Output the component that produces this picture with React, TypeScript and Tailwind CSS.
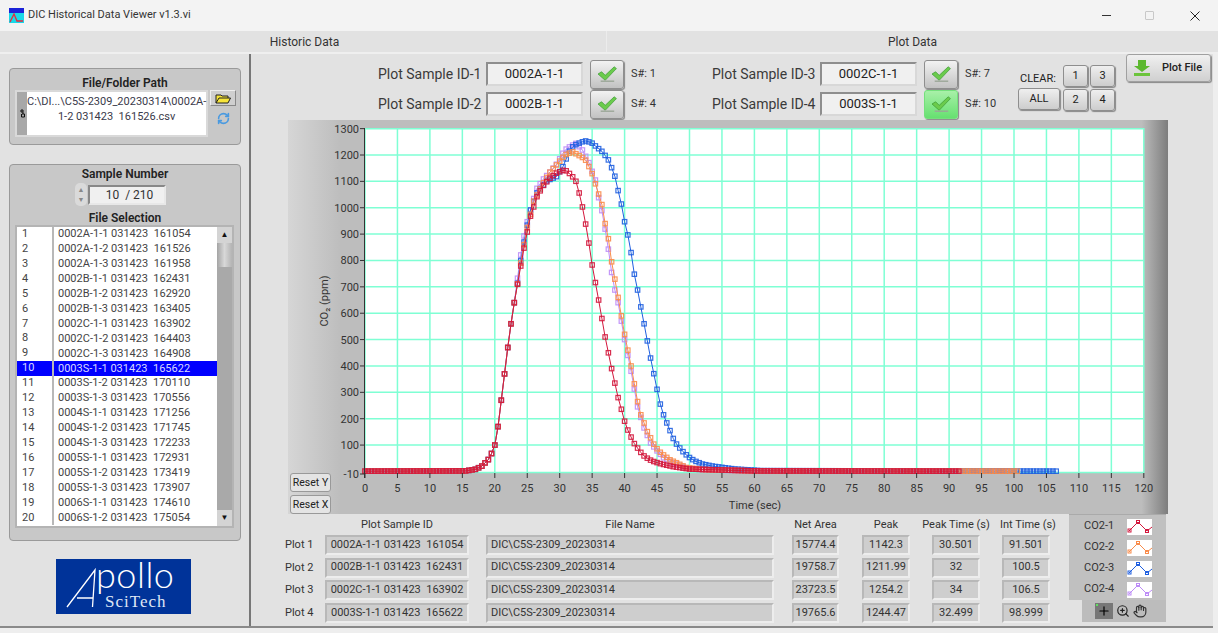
import { Hand, Plus, RefreshCw, ZoomIn } from "lucide-react";

type Pt = [number, number];

const rise: Pt[] = [
  [0, 1], [15.5, 2], [17, 8], [18, 20], [19, 45], [19.5, 68], [20, 100], [20.5, 170], [21, 270],
  [21.5, 370], [22, 470], [22.5, 560], [23, 640], [23.4, 696],
];

const curves: { color: string; end: number; pts: Pt[] }[] = [
  {
    color: "#bd8cf7",
    end: 99,
    pts: [
      ...rise.slice(0, 13), [23.4, 715], [24, 821], [24.5, 893], [25, 947], [26.4, 1070], [27.5, 1109], [28.5, 1135], [29.5, 1165],
      [30.8, 1219], [31.7, 1234], [32.5, 1244], [33.5, 1219], [34.5, 1171], [35.5, 1105], [35.9, 1048], [36.5, 989],
      [37, 919], [37.5, 843], [37.9, 768], [38.5, 688], [39, 640], [40, 500], [41, 380], [42, 245], [43, 165], [44, 108],
      [45, 78], [46, 52], [47, 38], [48, 28], [49.5, 14], [52, 6], [60, 2], [99, 1],
    ],
  },
  {
    color: "#1f5fe0",
    end: 106.5,
    pts: [
      ...rise, [24, 800], [24.5, 870], [25.4, 985], [26.5, 1056], [28, 1102], [29.5, 1118], [30.5, 1156], [31.7, 1226], [32.6, 1241],
      [33.9, 1254], [34.9, 1247], [35.9, 1226], [36.6, 1212], [37.6, 1178], [38, 1152], [38.6, 1113], [39, 1065],
      [39.5, 1014], [39.9, 957], [40.5, 897], [41, 830], [41.4, 760], [42, 688], [43, 560], [44, 430], [45.4, 264],
      [45.9, 221], [46.5, 184], [47.1, 149], [47.6, 119], [48.1, 100], [49, 75], [49.8, 56], [50.8, 40], [52, 28],
      [53.6, 20], [57, 9], [61, 3], [106.5, 1],
    ],
  },
  {
    color: "#f98c4b",
    end: 100.5,
    pts: [
      ...rise, [24, 790], [24.5, 860], [25, 925], [26, 1025], [27.5, 1095], [28.5, 1135], [29.5, 1162], [30.8, 1200], [32, 1212],
      [33.9, 1185], [34.9, 1137], [35.9, 1060], [36.6, 1004], [37, 940], [37.6, 871], [38, 795], [38.6, 716], [39, 660],
      [40, 520], [41, 400], [42, 265], [42.4, 221], [43, 184], [43.5, 151], [44.1, 123], [44.7, 94], [45.6, 70], [47, 44],
      [48, 33], [49.5, 15], [52, 7], [60, 2], [100.5, 1],
    ],
  },
  {
    color: "#d3173c",
    end: 91.5,
    pts: [
      ...rise, [24, 779], [24.5, 847], [25, 908], [25.4, 961], [26, 1003], [26.5, 1042], [27.4, 1082], [28.5, 1112], [29.5, 1131],
      [30.5, 1142], [31, 1140], [31.8, 1124], [32.6, 1097], [33, 1056], [33.5, 1003], [34, 938], [34.5, 866], [35, 783], [35.6, 703],
      [36, 650], [37, 510], [38, 390], [39, 280], [39.6, 227], [40.06, 185], [40.5, 157], [41.4, 109], [42.4, 75], [43.1, 56],
      [44.2, 40], [45.7, 28], [47.5, 18], [50, 9], [60, 2], [91.5, 1],
    ],
  },
];

const xPos = (t: number) => 365 + t * 6.49;
const yPos = (v: number) => 155 + (1200 - v) * 0.2637;

function valueAt(pts: Pt[], t: number) {
  for (let i = 1; i < pts.length; i++) {
    if (t <= pts[i][0]) {
      const [t0, v0] = pts[i - 1];
      const [t1, v1] = pts[i];
      return v0 + ((v1 - v0) * (t - t0)) / (t1 - t0);
    }
  }
  return pts[pts.length - 1][1];
}

function Chart() {
  const xs = Array.from({ length: 25 }, (_, i) => i * 5);
  const ys = Array.from({ length: 13 }, (_, i) => (i + 1) * 100);
  return (
    <svg viewBox="288 120 880 394" className="block h-[394px] w-[880px]" fontFamily="Roboto, sans-serif">
      <rect x="365" y="128" width="779" height="345" fill="#fff" />
      {xs.map((x) => (
        <line key={x} x1={xPos(x)} x2={xPos(x)} y1="128" y2="473" stroke="#7fffd4" strokeWidth="1.5" />
      ))}
      {ys.map((v) => (
        <line key={v} x1="365" x2="1144" y1={yPos(v)} y2={yPos(v)} stroke="#7fffd4" strokeWidth="1.5" />
      ))}
      <line x1="365" x2="1144" y1="472.5" y2="472.5" stroke="#7fffd4" strokeWidth="1.5" />
      {curves.map((c) => {
        const samples: Pt[] = [];
        for (let t = 0; t <= c.end; t += 0.5) samples.push([xPos(t), yPos(valueAt(c.pts, t))]);
        return (
          <g key={c.color} fill="none" stroke={c.color}>
            <polyline points={samples.map((p) => p.join(",")).join(" ")} strokeWidth="1" />
            {samples.map(([x, y]) => (
              <rect key={x} x={x - 2.2} y={y - 2.2} width="4.4" height="4.4" strokeWidth="1.2" opacity="0.9" />
            ))}
          </g>
        );
      })}
      <line x1="364.5" x2="364.5" y1="128" y2="478" stroke="#333" />
      {[...ys, -10].map((v) => {
        const y = v === -10 ? 474 : yPos(v);
        return (
          <g key={v}>
            <line x1="360" x2="365" y1={y} y2={y} stroke="#333" />
            <text x="359" y={y + 4} textAnchor="end" fontSize="11" fill="#333">
              {v}
            </text>
          </g>
        );
      })}
      {xs.map((x) => (
        <g key={x}>
          <line x1={xPos(x)} x2={xPos(x)} y1="473" y2="478" stroke="#333" />
          <text x={xPos(x)} y="492" textAnchor="middle" fontSize="11" fill="#333">
            {x}
          </text>
        </g>
      ))}
      <text x="755" y="509" textAnchor="middle" fontSize="11" fill="#333">
        Time (sec)
      </text>
      <text transform="translate(328 301) rotate(-90)" textAnchor="middle" fontSize="11" fill="#333">
        CO₂ (ppm)
      </text>
    </svg>
  );
}

function CheckIcon() {
  return (
    <svg viewBox="0 0 24 20" className="h-[18px] w-[22px]">
      <path d="M2 10 L6 7.5 L10 11.5 L20 2 L22.5 4 L10 17 Z" fill="#6bcb4c" stroke="#3c9a35" strokeWidth="0.8" />
      <path d="M5 18 H20" stroke="#9aa596" strokeWidth="1.5" />
    </svg>
  );
}

function SampleRow({ label, value, s, active }: { label: string; value: string; s: string; active?: boolean }) {
  return (
    <div className="flex h-[30px] items-center">
      <span className="w-[106px] text-[14px] whitespace-nowrap text-[#3a3a3a]">{label}</span>
      <div className="ml-[2px] flex h-[24px] w-[97px] items-center justify-center border-2 border-t-[#8e8e8e] border-r-[#d8d8d8] border-b-[#d8d8d8] border-l-[#8e8e8e] bg-[#f0f0f0] text-[13px] text-[#222]">
        {value}
      </div>
      <button
        className={
          active
            ? "ml-[7px] flex h-[29px] w-[34px] items-center justify-center rounded-[3px] border border-[#74e07c] bg-[linear-gradient(180deg,#a8f0a8,#66e070)] shadow-[1px_1px_1px_#888]"
            : "ml-[7px] flex h-[29px] w-[34px] items-center justify-center rounded-[3px] border border-[#8e8e8e] bg-[linear-gradient(180deg,#f2f2f2,#c2c2c2)] shadow-[1px_1px_1px_#888]"
        }
      >
        <CheckIcon />
      </button>
      <span className="ml-[7px] text-[11px] whitespace-nowrap text-[#333]">{s}</span>
    </div>
  );
}

function ClearBtn({ children, className }: { children: React.ReactNode; className: string }) {
  return (
    <button
      className={`flex h-[22px] items-center justify-center rounded-[3px] border border-[#8e8e8e] bg-[linear-gradient(180deg,#efefef,#cdcdcd)] text-[11px] text-[#222] shadow-[1px_1px_1px_#888] ${className}`}
    >
      {children}
    </button>
  );
}

function Readout({ className, children }: { className: string; children: React.ReactNode }) {
  return (
    <div
      className={`flex h-[20px] items-center justify-center border-2 border-t-[#b8b8b8] border-r-[#ededed] border-b-[#ededed] border-l-[#b8b8b8] bg-[#cecece] text-[11px] whitespace-pre text-[#333] ${className}`}
    >
      {children}
    </div>
  );
}

const files = [
  "0002A-1-1 031423  161054", "0002A-1-2 031423  161526", "0002A-1-3 031423  161958", "0002B-1-1 031423  162431",
  "0002B-1-2 031423  162920", "0002B-1-3 031423  163405", "0002C-1-1 031423  163902", "0002C-1-2 031423  164403",
  "0002C-1-3 031423  164908", "0003S-1-1 031423  165622", "0003S-1-2 031423  170110", "0003S-1-3 031423  170556",
  "0004S-1-1 031423  171256", "0004S-1-2 031423  171745", "0004S-1-3 031423  172233", "0005S-1-1 031423  172931",
  "0005S-1-2 031423  173419", "0005S-1-3 031423  173907", "0006S-1-1 031423  174610", "0006S-1-2 031423  175054",
];

const plots = [
  { name: "Plot 1", id: "0002A-1-1 031423  161054", area: "15774.4", peak: "1142.3", pt: "30.501", it: "91.501" },
  { name: "Plot 2", id: "0002B-1-1 031423  162431", area: "19758.7", peak: "1211.99", pt: "32", it: "100.5" },
  { name: "Plot 3", id: "0002C-1-1 031423  163902", area: "23723.5", peak: "1254.2", pt: "34", it: "106.5" },
  { name: "Plot 4", id: "0003S-1-1 031423  165622", area: "19765.6", peak: "1244.47", pt: "32.499", it: "98.999" },
];

const legend = [
  { name: "CO2-1", color: "#d3173c" },
  { name: "CO2-2", color: "#f98c4b" },
  { name: "CO2-3", color: "#1f5fe0" },
  { name: "CO2-4", color: "#bd8cf7" },
];

function Swatch({ color }: { color: string }) {
  return (
    <svg viewBox="0 0 25 16" className="h-[16px] w-[25px] bg-white" fill="none" stroke={color}>
      <polyline points="2,12 11,3 20,12 25,8" />
      <rect x="1" y="10" width="3" height="3" />
      <rect x="9.5" y="1.5" width="3" height="3" />
      <rect x="18.5" y="10.5" width="3" height="3" />
    </svg>
  );
}

function Logo() {
  return (
    <div className="relative ml-[56px] h-[55px] w-[135px] bg-[#003399] text-white">
      <svg viewBox="0 0 135 55" className="absolute inset-0 h-full w-full" fill="none" stroke="#fff" strokeWidth="1.3">
        <path d="M11 48 L39 11 L36.5 48 M21 39 H37" />
      </svg>
      <span className="absolute top-0 left-[40px] font-['Lato',sans-serif] text-[36px] leading-[30px] font-light tracking-[0.5px]">
        pollo
      </span>
      <span className="absolute top-[33px] left-[49px] font-['Liberation_Serif',serif] text-[17px] leading-[20px] tracking-[1px] text-[#dfe6f5]">
        SciTech
      </span>
    </div>
  );
}

export default function App() {
  return (
    <div className="flex h-[633px] w-[1218px] flex-col overflow-hidden bg-[#eeeeee] font-['Roboto',sans-serif] text-[#333]">
      {/* title bar */}
      <div className="flex h-[31px] shrink-0 items-center bg-[#f3f3f3] pl-[9px]">
        <svg viewBox="0 0 15 15" className="h-[15px] w-[15px]">
          <rect width="15" height="15" fill="#19d8e8" />
          <rect width="15" height="5" fill="#1a22d8" />
          <path d="M1 14 L5 6 L8 13 L14 13" stroke="#e8283c" strokeWidth="1.3" fill="none" />
        </svg>
        <span className="ml-[4px] text-[11px] text-[#333]">DIC Historical Data Viewer v1.3.vi</span>
        <div className="ml-auto flex items-center">
          <span className="h-px w-[9px] bg-[#333]" />
          <span className="ml-[34px] h-[9px] w-[9px] rounded-[1px] border border-[#c8c8c8]" />
          <svg viewBox="0 0 10 10" className="mr-[18px] ml-[36px] h-[10px] w-[10px]" stroke="#222" strokeWidth="1">
            <path d="M0.5 0.5 L9.5 9.5 M9.5 0.5 L0.5 9.5" />
          </svg>
        </div>
      </div>

      {/* tab band */}
      <div className="flex h-[23px] w-[1218px] shrink-0 border-b-2 border-[#efefef] bg-[#e2e2e2] text-[12px] text-[#333]">
        <div className="flex w-[607px] items-center justify-center border-r border-[#ececec] pl-[3px]">Historic Data</div>
        <div className="flex flex-1 items-center justify-center">Plot Data</div>
      </div>

      <div className="flex h-[574px] w-[1213px] shrink-0 border-b-2 border-[#8a8a8a] bg-[#e2e2e2]">
        {/* left column */}
        <div className="flex w-[251px] shrink-0 flex-col border-r-2 border-[#777] pt-[14px]">
          <div className="ml-[9px] h-[77px] w-[232px] rounded-[4px] border border-[#9a9a9a] bg-[#c8c8c8] px-[5px]">
            <div className="h-[21px] pt-[5px] text-center text-[12px] leading-[18px] font-semibold text-[#222]">File/Folder Path</div>
            <div className="flex">
              <div className="flex h-[47px] w-[194px] bg-[#d9d9d9] p-[2px]">
                <div className="flex h-[43px] w-[10px] items-center justify-center bg-[#a8a8a8]">
                  <svg viewBox="0 0 5 9" className="h-[9px] w-[5px]" fill="none" stroke="#111">
                    <path d="M1 1 H3 V5 M1 1 V3 H3 M2 5 H4.5 V8 H1.5 V5" />
                  </svg>
                </div>
                <div className="h-[43px] flex-1 bg-white pt-[2px] text-center text-[11px] leading-[15px] whitespace-pre text-[#3a3a4a]">
                  {"C:\\DI...\\C5S-2309_20230314\\0002A-"}
                  <br />
                  {"1-2 031423  161526.csv"}
                </div>
              </div>
              <div className="ml-[2px] flex w-[26px] flex-col items-center">
                <button className="flex h-[16px] w-[26px] items-center justify-center border border-t-[#eee] border-r-[#888] border-b-[#888] border-l-[#eee] bg-[#cfcfcf]">
                  <svg viewBox="0 0 16 11" className="h-[11px] w-[16px]">
                    <path d="M1 10 V2 H6 L7 3 H13 V5 M1 10 L4 5 H15.5 L13 10 Z" fill="#f7e53a" stroke="#222" strokeWidth="1" />
                  </svg>
                </button>
                <RefreshCw className="mt-[6px] h-[13px] w-[13px] text-[#4a9ae0]" strokeWidth={3} />
              </div>
            </div>
          </div>

          <div className="mt-[19px] ml-[9px] flex h-[377px] w-[232px] flex-col rounded-[4px] border border-[#9a9a9a] bg-[#c8c8c8]">
            <div className="pt-[1px] text-center text-[12px] leading-[17px] font-semibold text-[#222]">Sample Number</div>
            <div className="flex h-[23px] items-center pl-[65px]">
              <div className="flex h-[23px] w-[12px] flex-col items-center justify-center rounded-[5px] bg-[#dadada] text-[7px] leading-[10px] text-[#888]">
                <span>▲</span>
                <span>▼</span>
              </div>
              <div className="ml-[1px] flex h-[20px] w-[78px] items-center justify-center border-2 border-t-[#888] border-r-[#e8e8e8] border-b-[#e8e8e8] border-l-[#888] bg-[#f0f0f0] pl-[5px] text-[12px] whitespace-pre text-[#333]">
                10  / 210
              </div>
            </div>
            <div className="mt-[5px] text-center text-[12px] leading-[14px] font-semibold text-[#222]">File Selection</div>
            <div className="ml-[5px] flex h-[303px] w-[219px] border-2 border-[#b4b4b4] bg-white">
              <div className="w-[201px] bg-white">
                {files.map((f, i) => (
                  <div
                    key={f}
                    className={
                      i === 9
                        ? "flex h-[14.93px] items-center bg-[#0000ff] text-[11px] whitespace-pre text-[#d8d8ff]"
                        : "flex h-[14.93px] items-center text-[11px] whitespace-pre text-[#444]"
                    }
                  >
                    <span className="w-[37px] border-r-2 border-[#b8b8b8] pl-[5px] leading-[14.93px]">{i + 1}</span>
                    <span className="pl-[4px]">{f}</span>
                  </div>
                ))}
              </div>
              <div className="flex w-[15px] flex-col bg-[#a9a9a9]">
                <div className="flex h-[16px] items-center justify-center bg-[#d4d4d4] text-[8px] text-[#111]">▲</div>
                <div className="h-[24px] bg-[linear-gradient(90deg,#a4a4a4,#d8d8d8,#b4b4b4)]" />
                <div className="flex-1" />
                <div className="flex h-[16px] items-center justify-center bg-[#d4d4d4] text-[8px] text-[#111]">▼</div>
              </div>
            </div>
          </div>

          <div className="mt-[18px]">
            <Logo />
          </div>
        </div>

        {/* right column */}
        <div className="flex flex-1 flex-col">
          <div className="flex h-[66px] shrink-0 pl-[127px]">
            <div className="mt-[5px] w-[334px]">
              <SampleRow label="Plot Sample ID-1" value="0002A-1-1" s="S#: 1" />
              <SampleRow label="Plot Sample ID-2" value="0002B-1-1" s="S#: 4" />
            </div>
            <div className="mt-[5px] w-[306px]">
              <SampleRow label="Plot Sample ID-3" value="0002C-1-1" s="S#: 7" />
              <SampleRow label="Plot Sample ID-4" value="0003S-1-1" s="S#: 10" active />
            </div>
            <div className="mt-[11px] flex w-[108px] items-start">
              <div className="w-[45px]">
                <div className="pt-[6px] pl-[2px] text-[11px] leading-[15px] text-[#222]">CLEAR:</div>
                <ClearBtn className="mt-[2px] w-[42px]">ALL</ClearBtn>
              </div>
              <div className="grid grid-cols-[25px_25px] gap-[2px]">
                <ClearBtn className="w-[25px]">1</ClearBtn>
                <ClearBtn className="w-[25px]">3</ClearBtn>
                <ClearBtn className="w-[25px]">2</ClearBtn>
                <ClearBtn className="w-[25px]">4</ClearBtn>
              </div>
            </div>
            <button className="flex h-[28px] w-[85px] items-center rounded-[3px] border border-[#a0a0a0] bg-[linear-gradient(180deg,#f0f0f0,#d0d0d0)] pl-[6px] text-[11px] font-medium text-[#222] shadow-[1px_1px_1px_#888]">
              <svg viewBox="0 0 18 16" className="h-[16px] w-[18px]">
                <path d="M5 0 H13 V6 H17 L9 12 L1 6 H5 Z" fill="#5cb82e" />
                <rect x="1" y="13" width="16" height="3" fill="#6cc43c" />
              </svg>
              <span className="ml-[11px]">Plot File</span>
            </button>
          </div>

          <div className="relative ml-[37px] h-[394px] w-[880px] shrink-0 bg-[linear-gradient(90deg,#d6d6d6_0,#bdbdbd_6%,#bdbdbd_97%,#7d7d7d_100%)]">
            <Chart />
            {["Reset Y", "Reset X"].map((label, i) => (
              <button
                key={label}
                className={
                  i === 0
                    ? "absolute top-[353px] left-[2px] flex h-[19px] w-[41px] items-center justify-center rounded-[3px] border border-[#999] bg-[#e4e4e4] text-[10.5px] whitespace-nowrap text-[#222]"
                    : "absolute top-[375px] left-[2px] flex h-[19px] w-[41px] items-center justify-center rounded-[3px] border border-[#999] bg-[#e4e4e4] text-[10.5px] whitespace-nowrap text-[#222]"
                }
              >
                {label}
              </button>
            ))}
          </div>

          <div className="flex flex-1">
            <div className="w-[818px] pl-[34px]">
              <div className="flex h-[21px] items-center pt-[2px] text-[11px] whitespace-nowrap text-[#333]">
                <span className="ml-[40px] w-[144px] text-center">Plot Sample ID</span>
                <span className="ml-[17px] w-[288px] text-center">File Name</span>
                <span className="ml-[18px] w-[47px] text-center">Net Area</span>
                <span className="ml-[23px] w-[48px] text-center">Peak</span>
                <span className="ml-[12px] w-[68px] text-center">Peak Time (s)</span>
                <span className="ml-[7px] w-[62px] text-center">Int Time (s)</span>
              </div>
              {plots.map((p) => (
                <div key={p.name} className="flex h-[22.6px] items-start">
                  <span className="w-[40px] text-[11px] leading-[20px] text-[#333]">{p.name}</span>
                  <Readout className="w-[144px]">{p.id}</Readout>
                  <Readout className="ml-[17px] w-[288px] !justify-start pl-[3px]">{"DIC\\C5S-2309_20230314"}</Readout>
                  <Readout className="ml-[18px] w-[47px]">{p.area}</Readout>
                  <Readout className="ml-[23px] w-[48px]">{p.peak}</Readout>
                  <Readout className="ml-[22px] w-[48px]">{p.pt}</Readout>
                  <Readout className="ml-[22px] w-[48px]">{p.it}</Readout>
                </div>
              ))}
            </div>
            <div className="w-[97px] shrink-0">
              <div className="flex h-[86px] flex-col border-t border-[#aaa] bg-[#c0c0c0] pt-[1px] pl-[15px]">
                {legend.map((l) => (
                  <div key={l.name} className="flex h-[21.6px] items-center text-[11px] text-[#333]">
                    <span className="w-[43px]">{l.name}</span>
                    <Swatch color={l.color} />
                  </div>
                ))}
              </div>
              <div className="ml-[13px] flex h-[22px] w-[84px] items-center bg-[#bcbcbc] pl-[13px]">
                <span className="relative flex h-[16px] w-[18px] items-center justify-center bg-[#777]">
                  <Plus className="h-[14px] w-[14px] text-black" strokeWidth={2} />
                  <span className="absolute top-[1px] left-[1px] h-[2px] w-[2px] bg-[#5fe05f]" />
                </span>
                <ZoomIn className="ml-[3px] h-[14px] w-[14px] text-[#222]" />
                <Hand className="ml-[3px] h-[14px] w-[14px] text-[#333]" />
              </div>
            </div>
          </div>
        </div>
      </div>
    </div>
  );
}
